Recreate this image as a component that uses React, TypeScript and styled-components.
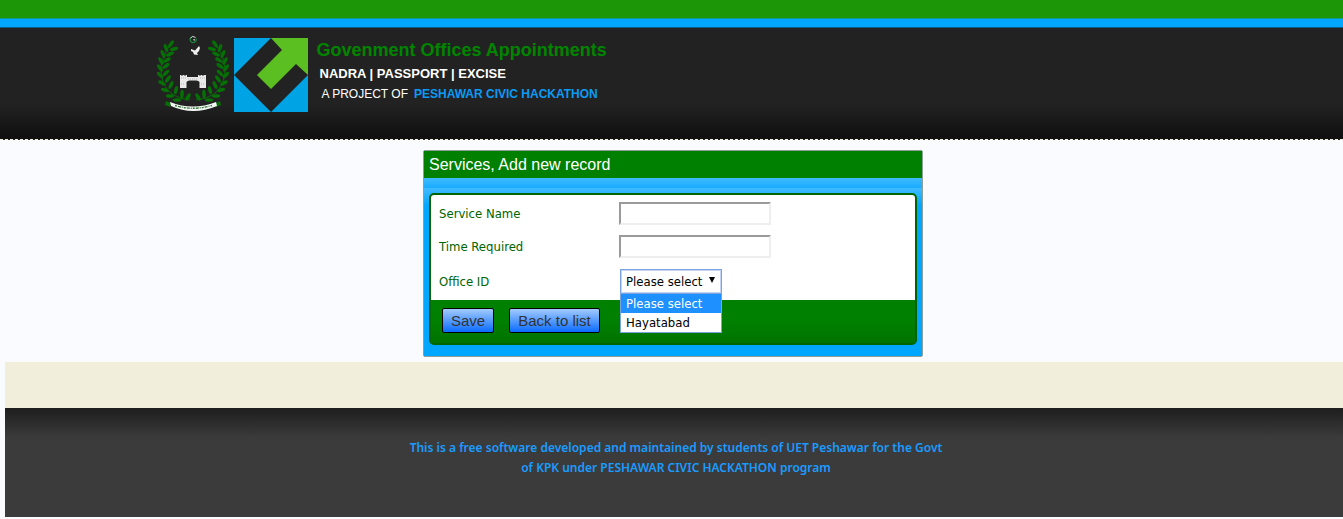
import React from "react";
import styled, { createGlobalStyle } from "styled-components";

const GlobalStyle = createGlobalStyle`
  * { box-sizing: border-box; }
  body {
    margin: 0;
    background: #f9fbfe;
    font-family: "DejaVu Sans Condensed", "DejaVu Sans", sans-serif;
    font-size: 13px;
    color: #006400;
  }
`;

const arial = `"Liberation Sans", Arial, sans-serif`;

const TopBar = styled.div`
  height: 28px;
  background: #00a6ff;
  border-top: 18px solid #1c9606;
  border-bottom: 1px solid #0a5c8c;
  box-shadow: inset 0 1px 0 #0f9a96;
`;

const Header = styled.header`
  height: 112px;
  background: linear-gradient(#222 0, #222 68%, #111 97%);
  border-bottom: 1px dashed #f1eedc;
`;

const HeaderInner = styled.a`
  display: flex;
  align-items: flex-start;
  gap: 5px;
  max-width: 1030px;
  margin: 0 auto;
  padding-top: 6px;
  text-decoration: none;
`;

const LogoText = styled.span`
  display: flex;
  flex-direction: column;
  padding: 4px 0 0 4px;
  white-space: nowrap;
  color: #fff;
`;

const SiteTitle = styled.span`
  font: bold 18px/24px ${arial};
  color: #008500;
`;

const Departments = styled.span`
  padding-left: 3px;
  font: bold 13px/24px ${arial};
`;

const Credit = styled.span`
  display: flex;
  gap: 6px;
  padding-left: 5px;
  font: 12px/16px ${arial};
`;

const Accent = styled.strong`
  color: #0a9bf5;
`;

const Main = styled.main`
  padding: 10px 0 5px 3px;
`;

const Panel = styled.form`
  width: 500px;
  max-width: 100%;
  margin: 0 auto;
  border: 1px solid #8f9f98;
  border-radius: 2px;
  background: #00a6ff;
`;

const PanelTitle = styled.h1`
  margin: 0;
  padding: 0 5px;
  font: 16px/27px ${arial};
  color: #fff;
  background: #008000;
`;

const PanelStrip = styled.div`
  height: 10px;
  background: linear-gradient(#3fbaff, #1aabff);
`;

const PanelBody = styled.div`
  padding: 5px 5px 11px;
  background: linear-gradient(#3fbaff, #00a6ff 18px);
`;

const Box = styled.div`
  border: 2px solid #006400;
  border-radius: 5px;
  background: #fff;
`;

const Fields = styled.div`
  display: flex;
  flex-direction: column;
  gap: 10px;
  padding: 7px 8px 6px;
`;

const Field = styled.div`
  display: grid;
  grid-template-columns: 180px 1fr;
  align-items: center;
  min-height: 23px;
`;

const TextInput = styled.input`
  width: 152px;
  height: 23px;
  border: 2px inset #eee;
  background: #fff;
  font: inherit;
`;

const SelectWrap = styled.div`
  position: relative;
  width: 102px;
  margin: 1px 0 0 1px;
`;

const Select = styled.select`
  display: block;
  appearance: none;
  width: 102px;
  height: 25px;
  padding: 0 5px;
  border: 1px solid #7ba3e0;
  box-shadow: inset 0 0 0 1px #c3d5f2;
  outline: none;
  background: #fff;
  font: inherit;
  color: #000;
`;

const Arrow = styled.svg`
  position: absolute;
  top: 8px;
  right: 6px;
  pointer-events: none;
`;

const Menu = styled.ul`
  position: absolute;
  z-index: 1;
  top: 24px;
  left: 0;
  width: 102px;
  margin: 0;
  padding: 0;
  list-style: none;
  border: 1px solid #7ba3e0;
  background: #fff;
`;

const MenuItem = styled.li<{ $active?: boolean }>`
  padding: 0 5px;
  line-height: 19px;
  color: ${(p) => (p.$active ? "#fff" : "#000")};
  background: ${(p) => (p.$active ? "#1e90ff" : "#fff")};
`;

const Actions = styled.div`
  display: flex;
  gap: 15px;
  padding: 8px 11px 10px;
  background: linear-gradient(#008000 50%, #007300);
`;

const Button = styled.button`
  height: 25px;
  padding: 0 8px;
  border: 1px solid #000;
  border-radius: 2px;
  background: linear-gradient(#a3cbff, #0a6cff);
  font: 15px/23px ${arial};
  color: #333;
`;

const FooterArea = styled.div`
  margin: 0 0 2px 5px;
`;

const Band = styled.div`
  height: 46px;
  background: #f2eedc;
`;

const Footer = styled.footer`
  padding: 30px 0 39px 4px;
  background: linear-gradient(#1e1e1e, #3b3b3b 30px);
  text-align: center;
`;

const FooterText = styled.p`
  max-width: 545px;
  margin: 0 auto;
  font: 600 12px/20px "Noto Sans", sans-serif;
  color: #1a9cff;
`;

/* Leaves of one wreath branch: x, y and angle from the tip down to the ribbon. */
const leaves: [number, number, number][] = [
  [14, 10, -55], [17, 15, -15], [9, 14, -110], [13, 20, -25], [6, 20, -115],
  [10, 26, -30], [4, 27, -120], [9, 32, -35], [3, 34, -125], [9, 39, -45],
  [3, 41, -135], [11, 45, -55], [5, 49, -150], [14, 51, -65], [8, 56, -165],
  [19, 56, -75], [13, 62, -175], [25, 60, -85], [20, 66, -180], [31, 63, -60],
];

const Branch = () => (
  <g fill="#067006">
    <path d="M15 9C1 25 0 48 15 60q7 5 18 6" fill="none" stroke="#067006" strokeWidth="1" />
    {leaves.map(([x, y, a]) => (
      <ellipse key={`${x}-${y}`} cx={x} cy={y} rx="4.2" ry="1.8" transform={`rotate(${a} ${x} ${y})`} />
    ))}
  </g>
);

const Emblem = () => (
  <svg width="72" height="80" viewBox="0 0 72 80" role="img" aria-label="Provincial emblem">
    <Branch />
    <g transform="matrix(-1 0 0 1 72 0)">
      <Branch />
    </g>
    <path d="M34 3.500a3 3 0 1 0 5 1" fill="none" stroke="#168038" strokeWidth="1.300" />
    <path d="M33.500 4q2-3 5-.5" fill="none" stroke="#d7e5da" strokeWidth="1" />
    <path d="M36.500 5.500l1.200.6" stroke="#fff" strokeWidth="1.200" />
    <path d="M34 15l4 1.500L42 12l1 2-1 3-2 2 1 2-4-.5-1-2.500-2-1z" fill="#eee" />
    <path
      d="M23 43v-2h1.500v1h1v-1h2v1h1v-1H30v2h11v-2h1.500v1h1v-1h2v1h1v-1H49v13h-6.500v-6q-1-1.500-3-1.500h-7q-2 0-3 1.500v6H23z"
      fill="#e9e9e9"
    />
    <path d="M24 44h5M43 44h5M31 45h10M24 50h4M44 50h4" stroke="#b5b5b5" strokeWidth="1" strokeDasharray="1 1" />
    <path d="M9 67l5 2-1 4-5-2zM63 67l-5 2 1 4 5-2z" fill="#067006" />
    <path d="M13 68q23 9 46 0l1 4q-24 10-46 0z" fill="#f4f8f4" />
    <path d="M18 71.500q18 5.500 37 0" fill="none" stroke="#3a7a42" strokeWidth="1.400" strokeDasharray="2 1 3 1 1 1" />
  </svg>
);

const Mark = () => (
  <svg width="74" height="74" viewBox="0 0 74 74" role="img" aria-label="Civic Hackathon">
    <path d="M0 0H37L0 37zM0 37L37 74H0zM74 37V74H37z" fill="#00a4e4" />
    <path d="M37 0H74V37L62 26 37 51 23 37 48 12z" fill="#5bbf21" />
  </svg>
);

const MarkWrap = styled.span`
  padding-top: 4px;
  line-height: 0;
`;

const options = ["Please select", "Hayatabad"];

export default function App() {
  return (
    <>
      <GlobalStyle />
      <TopBar />
      <Header>
        <HeaderInner href="#">
          <Emblem />
          <MarkWrap>
            <Mark />
          </MarkWrap>
          <LogoText>
            <SiteTitle>Govenment Offices Appointments</SiteTitle>
            <Departments>NADRA | PASSPORT | EXCISE</Departments>
            <Credit>
              A PROJECT OF <Accent>PESHAWAR CIVIC HACKATHON</Accent>
            </Credit>
          </LogoText>
        </HeaderInner>
      </Header>
      <Main>
        <Panel onSubmit={(e) => e.preventDefault()}>
          <PanelTitle>Services, Add new record</PanelTitle>
          <PanelStrip />
          <PanelBody>
            <Box>
              <Fields>
                <Field>
                  <label htmlFor="service">Service Name</label>
                  <TextInput id="service" type="text" />
                </Field>
                <Field>
                  <label htmlFor="time">Time Required</label>
                  <TextInput id="time" type="text" />
                </Field>
                <Field>
                  <label htmlFor="office">Office ID</label>
                  <SelectWrap>
                    <Select id="office" defaultValue={options[0]}>
                      {options.map((o) => (
                        <option key={o}>{o}</option>
                      ))}
                    </Select>
                    <Arrow width="8" height="7" viewBox="0 0 8 7">
                      <path d="M1 0h6L4 6z" fill="#000" />
                    </Arrow>
                    <Menu>
                      {options.map((o, i) => (
                        <MenuItem key={o} $active={i === 0}>
                          {o}
                        </MenuItem>
                      ))}
                    </Menu>
                  </SelectWrap>
                </Field>
              </Fields>
              <Actions>
                <Button type="submit">Save</Button>
                <Button type="button">Back to list</Button>
              </Actions>
            </Box>
          </PanelBody>
        </Panel>
      </Main>
      <FooterArea>
        <Band />
        <Footer>
          <FooterText>
            This is a free software developed and maintained by students of UET Peshawar for the Govt of KPK under
            PESHAWAR CIVIC HACKATHON program
          </FooterText>
        </Footer>
      </FooterArea>
    </>
  );
}
